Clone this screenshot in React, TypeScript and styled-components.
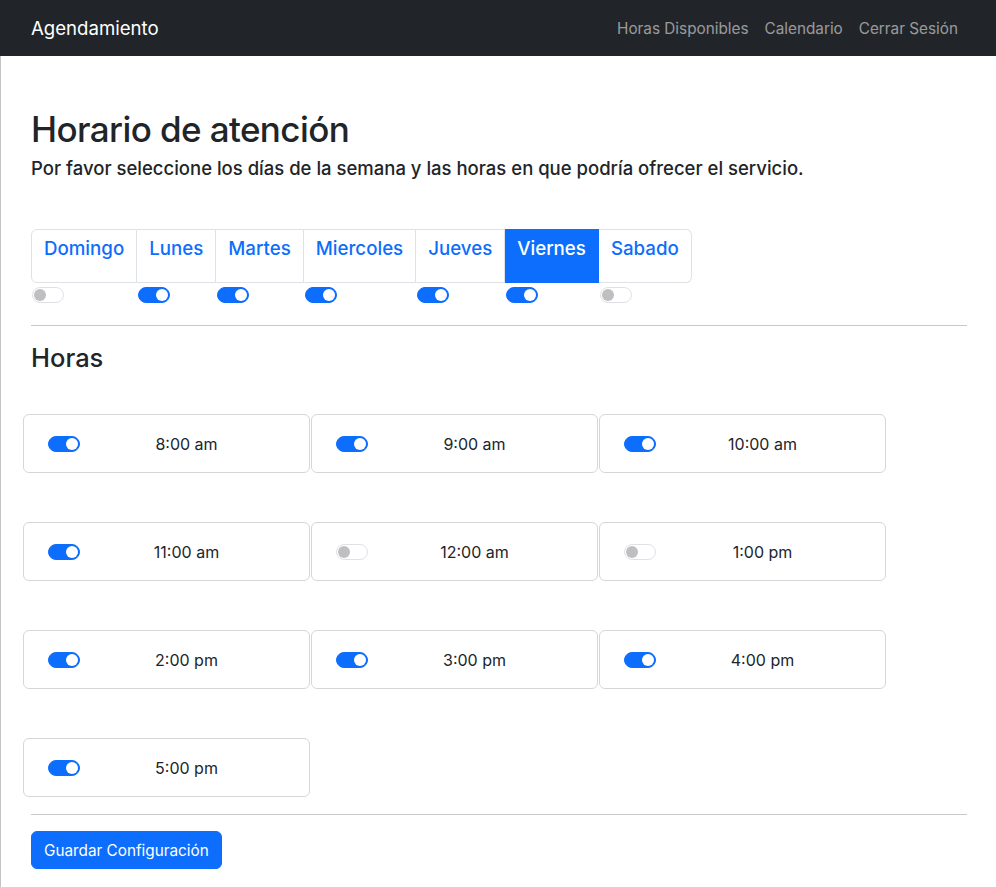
import React, { useState } from "react";
import styled, { createGlobalStyle } from "styled-components";

const Global = createGlobalStyle`
  * { box-sizing: border-box; }
  body {
    margin: 0;
    font-family: Inter, "Noto Sans", "Liberation Sans", sans-serif;
    color: #212529;
    background: #fff;
  }
`;

const Navbar = styled.nav`
  height: 56px;
  background: #212529;
  display: flex;
  align-items: center;
  justify-content: space-between;
  padding: 0 30px 0 31px;
`;

const Brand = styled.a`
  color: #fff;
  font-size: 18.6px;
  text-decoration: none;
`;

const NavLinks = styled.div`
  display: flex;
`;

const NavLink = styled.a`
  color: rgba(255, 255, 255, 0.55);
  font-size: 15.3px;
  padding: 0 8px;
  text-decoration: none;
`;

const Main = styled.main`
  border-left: 1px solid #c4c4c4;
  min-height: 831px;
  padding: 52px 29px 18px 30px;
`;

const Title = styled.h1`
  margin: 0;
  font-size: 35px;
  letter-spacing: -0.6px;
  font-weight: 500;
  line-height: 1.2;
`;

const Lead = styled.p`
  margin: 5px 0 0;
  font-size: 18.5px;
  font-weight: 500;
  line-height: 1.5;
`;

const Days = styled.div`
  display: flex;
  margin-top: 46px;
`;

const DayCol = styled.div`
  display: flex;
  flex-direction: column;
  align-items: flex-start;
`;

const Tab = styled.button<{ $active?: boolean; $first?: boolean; $last?: boolean }>`
  height: 54px;
  padding: 5px 12px 0;
  display: flex;
  align-items: flex-start;
  font-family: inherit;
  font-size: 18.7px;
  font-weight: 500;
  line-height: 27px;
  background: ${(p) => (p.$active ? "#0d6efd" : "#fff")};
  color: ${(p) => (p.$active ? "#fff" : "#0d6efd")};
  border: 1px solid ${(p) => (p.$active ? "#0d6efd" : "#dee2e6")};
  border-left-width: ${(p) => (p.$first ? "1px" : "0")};
  border-radius: ${(p) =>
    p.$first ? "6px 0 0 6px" : p.$last ? "0 6px 6px 0" : "0"};
  cursor: pointer;
  align-self: stretch;
`;

const Switch = styled.span<{ $on: boolean }>`
  display: inline-block;
  position: relative;
  width: 32px;
  height: 16px;
  flex: none;
  border-radius: 8px;
  background: ${(p) => (p.$on ? "#0d6efd" : "#fff")};
  border: 1px solid ${(p) => (p.$on ? "#0d6efd" : "#dee2e6")};
  cursor: pointer;
  &::after {
    content: "";
    position: absolute;
    top: 1px;
    left: ${(p) => (p.$on ? "17px" : "1px")};
    width: 12px;
    height: 12px;
    border-radius: 50%;
    background: ${(p) => (p.$on ? "#fff" : "#bfbfbf")};
  }
`;

const DaySwitch = styled(Switch)`
  margin: 4px 0 0 1px;
`;

const Rule = styled.hr<{ $top: number }>`
  margin: ${(p) => p.$top}px 0 0;
  border: 0;
  border-top: 1px solid #212529;
  opacity: 0.25;
`;

const Subtitle = styled.h3`
  margin: 17px 0 0;
  font-size: 25.5px;
  font-weight: 500;
  line-height: 1.2;
`;

const HoursGrid = styled.div`
  display: grid;
  grid-template-columns: repeat(3, 287px);
  column-gap: 1px;
  row-gap: 49px;
  margin: 41px 0 0 -8px;
`;

const HourCard = styled.label`
  height: 59px;
  border: 1px solid #d6d6d6;
  border-radius: 6px;
  display: flex;
  align-items: center;
  padding: 0 16px 0 24px;
  cursor: pointer;
`;

const HourText = styled.span`
  flex: 1;
  text-align: center;
  font-size: 16px;
`;

const SaveButton = styled.button`
  margin-top: 16px;
  height: 38px;
  padding: 0 12px;
  background: #0d6efd;
  color: #fff;
  border: 1px solid #0d6efd;
  border-radius: 6px;
  font-family: inherit;
  font-size: 15.3px;
  cursor: pointer;
`;

const days = [
  { name: "Domingo", on: false },
  { name: "Lunes", on: true },
  { name: "Martes", on: true },
  { name: "Miercoles", on: true },
  { name: "Jueves", on: true },
  { name: "Viernes", on: true },
  { name: "Sabado", on: false },
];

const hours = [
  { label: "8:00 am", on: true },
  { label: "9:00 am", on: true },
  { label: "10:00 am", on: true },
  { label: "11:00 am", on: true },
  { label: "12:00 am", on: false },
  { label: "1:00 pm", on: false },
  { label: "2:00 pm", on: true },
  { label: "3:00 pm", on: true },
  { label: "4:00 pm", on: true },
  { label: "5:00 pm", on: true },
];

export default function App() {
  const [active, setActive] = useState(5);
  const [dayState, setDayState] = useState(days.map((d) => d.on));
  const [hourState, setHourState] = useState(hours.map((h) => h.on));

  return (
    <>
      <Global />
      <Navbar>
        <Brand href="#">Agendamiento</Brand>
        <NavLinks>
          <NavLink href="#">Horas Disponibles</NavLink>
          <NavLink href="#">Calendario</NavLink>
          <NavLink href="#">Cerrar Sesión</NavLink>
        </NavLinks>
      </Navbar>
      <Main>
        <Title>Horario de atención</Title>
        <Lead>
          Por favor seleccione los días de la semana y las horas en que podría
          ofrecer el servicio.
        </Lead>
        <Days>
          {days.map((d, i) => (
            <DayCol key={d.name}>
              <Tab
                $active={i === active}
                $first={i === 0}
                $last={i === days.length - 1}
                onClick={() => setActive(i)}
              >
                {d.name}
              </Tab>
              <DaySwitch
                $on={dayState[i]}
                onClick={() =>
                  setDayState((s) => s.map((v, j) => (j === i ? !v : v)))
                }
              />
            </DayCol>
          ))}
        </Days>
        <Rule $top={22} />
        <Subtitle>Horas</Subtitle>
        <HoursGrid>
          {hours.map((h, i) => (
            <HourCard
              key={h.label}
              onClick={() =>
                setHourState((s) => s.map((v, j) => (j === i ? !v : v)))
              }
            >
              <Switch $on={hourState[i]} />
              <HourText>{h.label}</HourText>
            </HourCard>
          ))}
        </HoursGrid>
        <Rule $top={17} />
        <SaveButton>Guardar Configuración</SaveButton>
      </Main>
    </>
  );
}
